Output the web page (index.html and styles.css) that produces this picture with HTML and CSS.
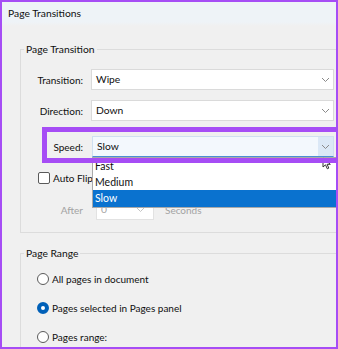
FILE: index.html
```html
<!DOCTYPE html>
<html lang="en">
<head>
    <meta charset="UTF-8">
    <title>Page Transitions</title>
    <link rel="stylesheet" href="styles.css">
</head>
<body>
    <div class="window">
        <div class="titlebar">Page Transitions</div>

        <div class="content">
            <!-- Page Transition group -->
            <fieldset class="group transition-group">
                <legend>Page Transition</legend>

                <div class="row first">
                    <span class="lbl">Transition:</span>
                    <div class="select">Wipe<svg class="chev" width="9" height="6" viewBox="0 0 9 6"><polyline points="1,1 4.5,4.5 8,1" /></svg></div>
                </div>

                <div class="row">
                    <span class="lbl">Direction:</span>
                    <div class="select">Down<svg class="chev" width="9" height="6" viewBox="0 0 9 6"><polyline points="1,1 4.5,4.5 8,1" /></svg></div>
                </div>

                <div class="row speed-row">
                    <span class="lbl">Speed:</span>
                    <div class="select open">
                        Slow
                        <span class="drop-btn"><svg class="chev" width="9" height="6" viewBox="0 0 9 6"><polyline points="1,1 4.5,4.5 8,1" /></svg></span>
                        <ul class="dropdown">
                            <li>Fast</li>
                            <li>Medium</li>
                            <li class="selected">Slow</li>
                        </ul>
                        <svg class="cursor" width="10" height="13" viewBox="0 0 10 13"><path d="M1 1 L1 10 L3.5 7.8 L5.3 11.8 L6.8 11.1 L5.1 7.3 L8.3 7.3 Z" /></svg>
                    </div>
                    <div class="highlight"></div>
                </div>

                <div class="row check-row">
                    <span class="checkbox"></span>
                    <span>Auto Flip</span>
                </div>

                <div class="row after-row">
                    <span class="lbl">After</span>
                    <div class="select small">0<svg class="chev" width="9" height="6" viewBox="0 0 9 6"><polyline points="1,1 4.5,4.5 8,1" /></svg></div>
                    <span class="unit">Seconds</span>
                </div>
            </fieldset>

            <!-- Page Range group -->
            <fieldset class="group range-group">
                <legend>Page Range</legend>
                <div class="radio-row first">
                    <span class="radio"></span>
                    <span>All pages in document</span>
                </div>
                <div class="radio-row">
                    <span class="radio checked"></span>
                    <span>Pages selected in Pages panel</span>
                </div>
                <div class="radio-row">
                    <span class="radio"></span>
                    <span>Pages range:</span>
                </div>
            </fieldset>
        </div>
    </div>
</body>
</html>
```

FILE: styles.css
```css
html, body {
    overflow: hidden;
    margin: 0;
    padding: 0;
}

body {
    font-family: Lato, "Noto Sans", sans-serif;
    font-size: 10px;
    color: #0f0f0f;
    background-color: #f0f0f0;
}

.window {
    width: 338px;
    height: 349px;
    box-sizing: border-box;
    border: 2px solid #a64df5;
    background-color: #f0f0f0;
    overflow: hidden;
}

.titlebar {
    height: 24px;
    line-height: 22px;
    padding-left: 6px;
    font-size: 10.3px;
    background: linear-gradient(#eef3f7 0, #eef3f7 20px, #f0f0f0 24px);
}

.content {
    padding-left: 18px;
}

.group {
    margin: 16px -14px 0 0;
    padding: 0 0 12px 0;
    border: 1px solid #dcdcdc;
    min-width: 0;
}

.group legend {
    margin-left: 3px;
    padding: 0 2px;
    line-height: 14px;
    font-size: 10.3px;
}

.range-group {
    margin-top: 13px;
}

/* form rows */
.row {
    display: flex;
    align-items: center;
    margin-top: 10px;
    height: 21px;
}

.row.first {
    margin-top: 13px;
}

.lbl {
    width: 62px;
    text-align: right;
    margin-right: 8px;
}

.select {
    position: relative;
    width: 243px;
    height: 21px;
    box-sizing: border-box;
    border: 1px solid #dadada;
    background-color: #ffffff;
    padding-left: 4px;
    line-height: 19px;
    font-size: 10.3px;
}

.chev {
    position: absolute;
    right: 3px;
    top: 7px;
    fill: none;
    stroke: #8a8a8a;
    stroke-width: 1;
}

.speed-row {
    position: relative;
    margin-top: 15px;
}

.speed-row .lbl {
    margin-right: 9px;
}

.select.open {
    width: 242px;
    background-color: #f3f8fd;
    border-color: #cfdff0;
    border-bottom: 1px solid #4a8fd4;
}

.drop-btn {
    position: absolute;
    top: 0;
    right: 0;
    width: 15px;
    height: 19px;
    background-color: #dbe8f6;
}

.drop-btn .chev {
    right: 3px;
}

.dropdown {
    position: absolute;
    top: 20px;
    left: -1px;
    width: 243px;
    margin: 0;
    padding: 0;
    list-style: none;
    background-color: #ffffff;
    border: 1px solid #a9a9a9;
    z-index: 2;
}

.dropdown li {
    height: 16px;
    line-height: 16px;
    padding-left: 2px;
    font-size: 10.5px;
}

.dropdown li.selected {
    height: 17px;
    background-color: #0a72cf;
    color: #ffffff;
}

.cursor {
    position: absolute;
    right: 1px;
    top: 20px;
    z-index: 3;
    fill: #ffffff;
    stroke: #333333;
    stroke-width: 1;
}

.highlight {
    position: absolute;
    left: 21px;
    top: -9px;
    width: 310px;
    height: 36px;
    box-sizing: border-box;
    border: 5px solid #a64df5;
    z-index: 4;
}

.check-row {
    margin-top: 14px;
    height: 14px;
    padding-left: 17px;
}

.checkbox {
    width: 10px;
    height: 10px;
    border: 1px solid #5a5a5a;
    border-radius: 2px;
    background-color: #ffffff;
    margin-right: 3px;
}

.after-row {
    margin-top: 14px;
    color: #a3a3a3;
}

.after-row .lbl {
    margin-right: 13px;
}

.select.small {
    width: 58px;
    color: #a3a3a3;
    border-color: #e2e2e2;
}

.select.small .chev {
    stroke: #c4c4c4;
    right: 8px;
}

.unit {
    margin-left: 11px;
}

/* radios */
.radio-row {
    display: flex;
    align-items: center;
    height: 14px;
    margin-top: 15px;
    padding-left: 16px;
}

.radio-row.first {
    margin-top: 12px;
}

.radio {
    width: 10px;
    height: 10px;
    border: 1px solid #5a5a5a;
    border-radius: 50%;
    background-color: #ffffff;
    margin-right: 3px;
}

.radio.checked {
    width: 4px;
    height: 4px;
    border: 4px solid #0060b8;
}
```
